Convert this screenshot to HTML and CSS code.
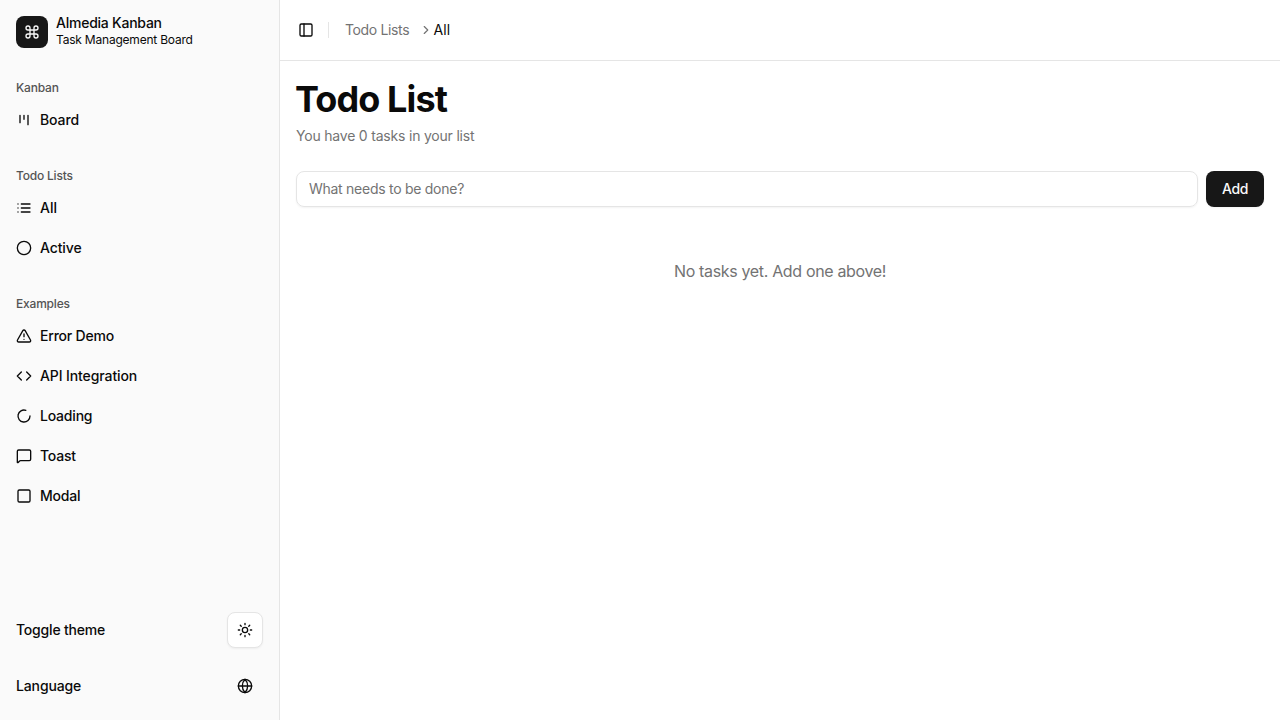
FILE: index.html
```html
<!DOCTYPE html>
<html lang="en">
<head>
<meta charset="utf-8">
<title>Almedia Kanban</title>
<link rel="stylesheet" href="styles.css">
</head>
<body>
<div class="app">
  <aside class="sidebar">
    <div class="brand">
      <div class="logo"><svg class="icon" viewBox="0 0 24 24"><path d="M15 6v12a3 3 0 1 0 3-3H6a3 3 0 1 0 3 3V6a3 3 0 1 0-3 3h12a3 3 0 1 0-3-3"/></svg></div>
      <div class="brand-text"><span class="brand-name">Almedia Kanban</span><span class="brand-sub">Task Management Board</span></div>
    </div>
    <nav class="nav">
      <section class="group">
        <h2 class="group-label">Kanban</h2>
        <a class="item"><svg class="icon" viewBox="0 0 24 24"><path d="M6 5v11M12 5v6M18 5v14"/></svg><span>Board</span></a>
      </section>
      <section class="group">
        <h2 class="group-label">Todo Lists</h2>
        <a class="item"><svg class="icon" viewBox="0 0 24 24"><path d="M3 12h.01M3 18h.01M3 6h.01M8 12h13M8 18h13M8 6h13"/></svg><span class="natural">All</span></a>
        <a class="item"><svg class="icon" viewBox="0 0 24 24"><circle cx="12" cy="12" r="10"/></svg><span>Active</span></a>
      </section>
      <section class="group">
        <h2 class="group-label">Examples</h2>
        <a class="item"><svg class="icon" viewBox="0 0 24 24"><path d="m21.73 18-8-14a2 2 0 0 0-3.48 0l-8 14A2 2 0 0 0 4 21h16a2 2 0 0 0 1.73-3M12 9v4M12 17h.01"/></svg><span class="tight">Error Demo</span></a>
        <a class="item"><svg class="icon" viewBox="0 0 24 24"><path d="m16 18 6-6-6-6M8 6l-6 6 6 6"/></svg><span>API Integration</span></a>
        <a class="item"><svg class="icon" viewBox="0 0 24 24"><path d="M21 12a9 9 0 1 1-6.219-8.56"/></svg><span class="tight">Loading</span></a>
        <a class="item"><svg class="icon" viewBox="0 0 24 24"><path d="M22 17a2 2 0 0 1-2 2H6.828a2 2 0 0 0-1.414.586l-2.202 2.202A.71.71 0 0 1 2 21.286V5a2 2 0 0 1 2-2h16a2 2 0 0 1 2 2z"/></svg><span class="tight">Toast</span></a>
        <a class="item"><svg class="icon" viewBox="0 0 24 24"><rect width="18" height="18" x="3" y="3" rx="2"/></svg><span class="tight">Modal</span></a>
      </section>
    </nav>
    <footer class="footer">
      <div class="setting"><span class="tight">Toggle theme</span><button class="icon-btn outlined" aria-label="Toggle theme"><svg class="icon" viewBox="0 0 24 24"><circle cx="12" cy="12" r="4"/><path d="M12 2v2M12 20v2M4.93 4.93l1.41 1.41M17.66 17.66l1.41 1.41M2 12h2M20 12h2M6.34 17.66l-1.41 1.41M19.07 4.93l-1.41 1.41"/></svg></button></div>
      <div class="setting"><span>Language</span><button class="icon-btn" aria-label="Language"><svg class="icon" viewBox="0 0 24 24"><circle cx="12" cy="12" r="10"/><path d="M12 2a14.5 14.5 0 0 0 0 20 14.5 14.5 0 0 0 0-20M2 12h20"/></svg></button></div>
    </footer>
  </aside>
  <main class="main">
    <header class="topbar">
      <button class="trigger" aria-label="Toggle sidebar"><svg class="icon" viewBox="0 0 24 24"><rect width="18" height="18" x="3" y="3" rx="2"/><path d="M9 3v18"/></svg></button>
      <span class="divider"></span>
      <nav class="crumbs"><span class="crumb">Todo Lists</span><svg class="icon chevron" viewBox="0 0 24 24"><path d="m9 18 6-6-6-6"/></svg><span class="current">All</span></nav>
    </header>
    <div class="content">
      <h1 class="title">Todo List</h1>
      <p class="subtitle">You have 0 tasks in your list</p>
      <form class="add-form"><input class="input" type="text" placeholder="What needs to be done?"><button class="add" type="button">Add</button></form>
      <p class="empty"><span>No tasks yet. Add one above!</span></p>
    </div>
  </main>
</div>
</body>
</html>
```
FILE: styles.css
```css
* { box-sizing: border-box; }
body { margin: 0; font-family: Inter, "Liberation Sans", sans-serif; font-size: 14px; line-height: 20px; color: #0a0a0a; background: #fff; -webkit-font-smoothing: antialiased; }
h1, h2, p { margin: 0; }
button, input { font: inherit; color: inherit; }
button { border: 0; padding: 0; background: none; }
.app { display: flex; height: 720px; overflow: hidden; }
.icon { display: block; width: 16px; height: 16px; flex: none; fill: none; stroke: currentColor; stroke-width: 2; stroke-linecap: round; stroke-linejoin: round; }
span, h1, h2, p { white-space: nowrap; }

.sidebar { display: flex; flex-direction: column; flex: none; width: 280px; background: #fafafa; border-right: 1px solid #e5e5e5; }
.brand { display: flex; align-items: center; gap: 8px; height: 64px; padding: 0 16px; }
.logo { display: grid; place-items: center; width: 32px; height: 32px; border-radius: 8px; background: #171717; color: #fafafa; }
.brand-text { display: flex; flex-direction: column; padding-bottom: 2px; }
.brand-name { font-weight: 500; line-height: 16px; padding-bottom: 1px; letter-spacing: -.24px; }
.brand-sub { font-size: 12px; line-height: 16px; letter-spacing: -.21px; }
.nav { display: flex; flex: 1; flex-direction: column; gap: 8px; }
.group { display: flex; flex-direction: column; padding: 8px; }
.group-label { height: 32px; padding: 0 8px; font-size: 12px; font-weight: 500; line-height: 32px; letter-spacing: -.2px; color: #545454; }
.item { display: flex; align-items: center; gap: 8px; height: 32px; padding: 0 8px; font-weight: 500; letter-spacing: -.1px; }
.item + .item { margin-top: 8px; }
.natural { letter-spacing: 0; }
.tight { letter-spacing: -.2px; }
.footer { display: flex; flex-direction: column; gap: 20px; padding: 0 16px 16px; }
.setting { display: flex; align-items: center; justify-content: space-between; height: 36px; font-weight: 500; letter-spacing: -.13px; }
.icon-btn { display: grid; place-items: center; width: 36px; height: 36px; border-radius: 8px; }
.outlined { border: 1px solid #e5e5e5; background: #fff; box-shadow: 0 1px 2px rgba(0, 0, 0, .05); }

.main { flex: 1; min-width: 0; }
.topbar { display: flex; align-items: center; height: 61px; padding: 0 12px; border-bottom: 1px solid #e5e5e5; }
.trigger { display: grid; place-items: center; width: 28px; height: 28px; }
.divider { width: 1px; height: 16px; margin: 0 16px 0 8px; background: #e5e5e5; }
.crumbs { display: flex; align-items: center; color: #737373; }
.crumb { width: 74px; letter-spacing: -.36px; }
.chevron { width: 14px; height: 14px; margin-right: .6px; }
.current { color: #0a0a0a; }
.content { padding: 18px 16px; }
.title { font-size: 36px; line-height: 40px; font-weight: 700; letter-spacing: -.9px; text-indent: -1px; }
.subtitle { margin-top: 7px; letter-spacing: -.2px; color: #737373; }
.add-form { display: flex; gap: 8px; margin-top: 25px; }
.input { flex: 1; min-width: 0; height: 36px; padding: 3px 12px 5px; border: 1px solid #e5e5e5; border-radius: 8px; background: transparent; outline: none; letter-spacing: -.27px; box-shadow: 0 1px 2px rgba(0, 0, 0, .05); }
.input::placeholder { color: #737373; opacity: 1; }
.add { width: 58px; height: 36px; border-radius: 8px; background: #171717; color: #fafafa; font-weight: 500; letter-spacing: -.3px; box-shadow: 0 1px 2px rgba(0, 0, 0, .05); }
.empty { margin-top: 52px; text-align: center; font-size: 16px; line-height: 24px; letter-spacing: -.34px; color: #737373; }
```
